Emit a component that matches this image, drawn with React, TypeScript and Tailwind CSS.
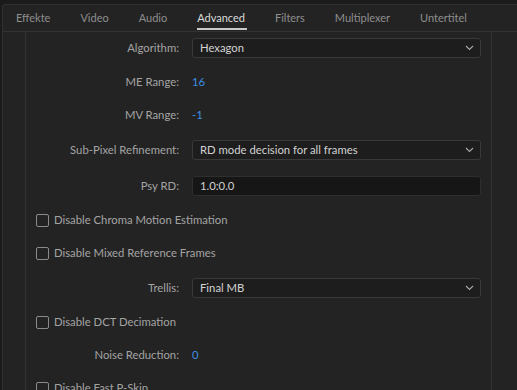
import React from 'react';

const tabs = ['Effekte', 'Video', 'Audio', 'Advanced', 'Filters', 'Multiplexer', 'Untertitel'];

const Chevron = () => (
  <svg width="9" height="6" viewBox="0 0 9 6" className="text-[#a8a8a8]">
    <path d="M1 1l3.5 3.5L8 1" fill="none" stroke="currentColor" strokeWidth="1.1" />
  </svg>
);

const Label: React.FC<{ text: string }> = ({ text }) => (
  <div className="w-[153px] shrink-0 text-right text-[#a3a3a3]">{text}</div>
);

const SelectRow: React.FC<{ label: string; value: string }> = ({ label, value }) => (
  <div className="h-[36px] flex items-center">
    <Label text={label} />
    <div className="ml-[13px] w-[289px] h-[20px] rounded-[3px] border border-[#393939] bg-[#1d1d1d] flex items-center justify-between pl-[7px] pr-[6px] text-[#d2d2d2]">
      <span>{value}</span>
      <Chevron />
    </div>
  </div>
);

const ValueRow: React.FC<{ label: string; value: string }> = ({ label, value }) => (
  <div className="h-[33px] flex items-center">
    <Label text={label} />
    <div className="ml-[13px] text-[#3c8fe3]">{value}</div>
  </div>
);

const CheckRow: React.FC<{ label: string }> = ({ label }) => (
  <div className="h-[33px] flex items-center pl-[10px]">
    <div className="w-[13px] h-[13px] rounded-[2px] border-[1.5px] border-[#8a8a8a] shrink-0" />
    <span className="ml-[5px] text-[#a3a3a3]">{label}</span>
  </div>
);

export default function App() {
  return (
    <div
      className="w-[517px] h-[390px] bg-[#1b1b1b] overflow-hidden pt-[4px] pl-[2px] text-[11.3px]"
      style={{ fontFamily: 'Lato, "Open Sans", sans-serif' }}
    >
      <div className="h-[400px] bg-[#232323] rounded-tl-[4px] border-t border-l border-[#303030] flex flex-col">
        {/* tabs */}
        <div className="h-[27px] shrink-0 flex items-stretch gap-[30px] pl-[13px] border-b border-[#333333] text-[11px]">
          {tabs.map((t) => (
            <div
              key={t}
              className={`relative flex items-center ${t === 'Advanced' ? 'text-[#dadada]' : 'text-[#8e8e8e]'}`}
            >
              {t}
              {t === 'Advanced' && (
                <div className="absolute left-0 right-[-2px] bottom-[1px] h-[2px] bg-[#c9c9c9]" />
              )}
            </div>
          ))}
        </div>

        {/* body */}
        <div className="flex flex-1">
          <div className="w-[23px] shrink-0 border-r border-[#333333]" />
          <div className="w-[465px] shrink-0 -mt-[2px]">
            <SelectRow label="Algorithm:" value="Hexagon" />
            <ValueRow label="ME Range:" value="16" />
            <ValueRow label="MV Range:" value="-1" />
            <SelectRow label="Sub-Pixel Refinement:" value="RD mode decision for all frames" />
            <div className="h-[36px] flex items-center">
              <Label text="Psy RD:" />
              <div className="ml-[13px] w-[289px] h-[20px] rounded-[3px] border border-[#2e2e2e] bg-[#161616] flex items-center pl-[7px] text-[#d2d2d2]">
                1.0:0.0
              </div>
            </div>
            <CheckRow label="Disable Chroma Motion Estimation" />
            <CheckRow label="Disable Mixed Reference Frames" />
            <SelectRow label="Trellis:" value="Final MB" />
            <CheckRow label="Disable DCT Decimation" />
            <ValueRow label="Noise Reduction:" value="0" />
            <CheckRow label="Disable Fast P-Skip" />
          </div>
          <div className="flex-1 border-l border-[#333333]" />
        </div>
      </div>
    </div>
  );
}
